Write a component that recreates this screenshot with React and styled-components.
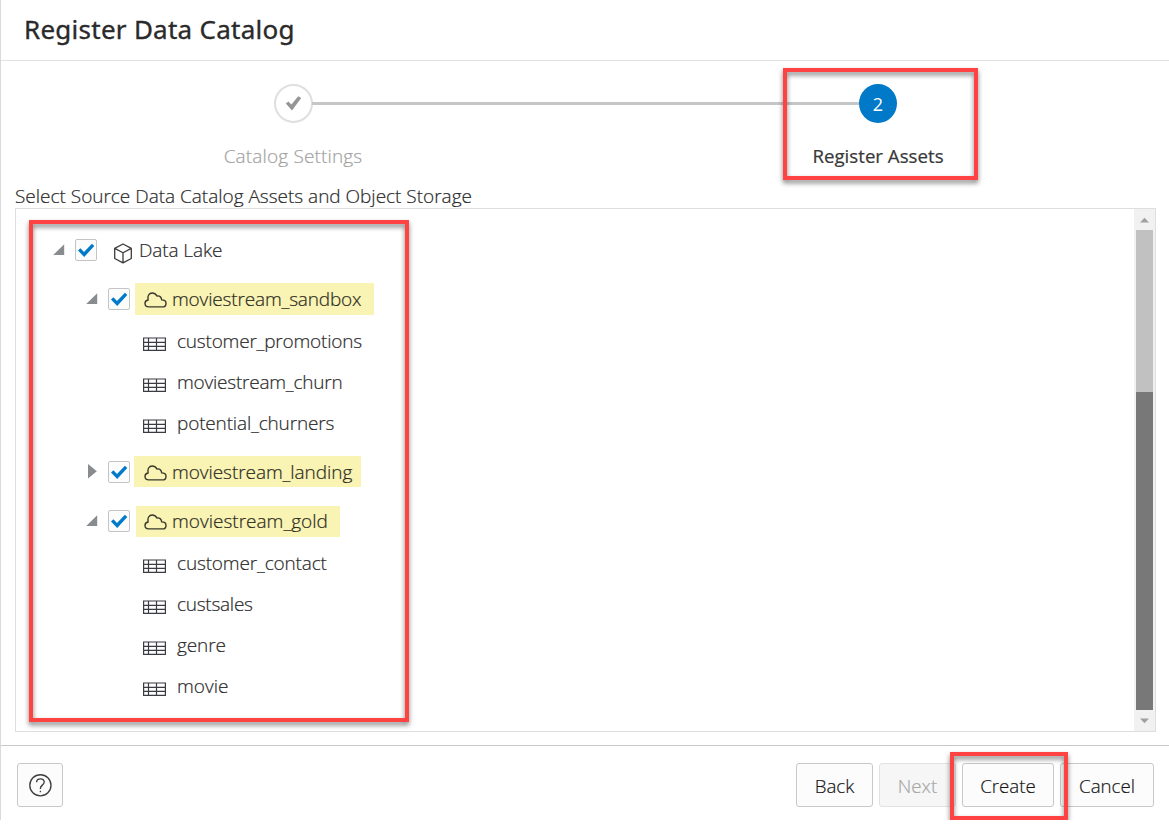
import React from "react";
import styled, { createGlobalStyle } from "styled-components";

const GlobalStyle = createGlobalStyle`
  * { box-sizing: border-box; }
  body {
    margin: 0;
    background: #fff;
    overflow: hidden;
    font-family: "Open Sans", "Noto Sans", sans-serif;
    font-size: 19px;
    font-weight: 300;
    color: #2a2a2a;
    -webkit-text-stroke: 0.2px currentColor;
  }
  svg { display: block; flex: none; }
`;

const Dialog = styled.div`
  position: relative;
  width: 1169px;
  height: 820px;
  display: flex;
  flex-direction: column;
  border-left: 1px solid #dadada;
`;

const Header = styled.header`
  height: 61px;
  padding-left: 23px;
  border-bottom: 1px solid #e2e2e2;
`;

const Title = styled.h1`
  margin: 0;
  font-family: "Noto Sans", sans-serif;
  font-size: 26px;
  line-height: 59px;
  font-weight: 400;
  letter-spacing: 0.26px;
  -webkit-text-stroke: 0.35px currentColor;
`;

const Train = styled.div`
  height: 122px;
  padding: 23px 0 0 184px;
  display: flex;
`;

const Step = styled.div`
  width: 217px;
  display: flex;
  flex-direction: column;
  align-items: center;
`;

const StepCircle = styled.div`
  width: ${(p) => (p.$current ? 38 : 39)}px;
  height: 39px;
  margin-right: ${(p) => (p.$current ? 1 : 0)}px;
  border-radius: 50%;
  border: 2px solid ${(p) => (p.$current ? "#007ac8" : "#dedfe0")};
  background: ${(p) => (p.$current ? "#007ac8" : "#fff")};
  color: #fff;
  font-size: 18px;
  font-weight: 400;
  -webkit-text-stroke: 0;
  display: flex;
  align-items: center;
  justify-content: center;
`;

const StepLabel = styled.div`
  margin-top: 20px;
  line-height: 26px;
  white-space: nowrap;
  color: ${(p) => (p.$current ? "#383838" : "#a2a2a2")};
  font-size: ${(p) => (p.$current ? "18.7px" : "19px")};
  font-weight: ${(p) => (p.$current ? 400 : 300)};
  letter-spacing: ${(p) => (p.$current ? "0" : "0.15px")};
  padding-right: 1px;
  -webkit-text-stroke: 0.2px currentColor;
`;

const Connector = styled.div`
  flex: none;
  width: 547px;
  height: 3px;
  margin: 18px -89px 0 -90px;
  background: #c4c6c8;
`;

const Prompt = styled.div`
  height: 25px;
  padding-left: 14px;
  line-height: 27px;
  white-space: nowrap;
  letter-spacing: -0.01px;
`;

const Panel = styled.section`
  width: 1141px;
  height: 524px;
  margin-left: 14px;
  border: 1px solid #dedede;
  display: flex;
  justify-content: space-between;
`;

const Tree = styled.div`
  padding-top: 14px;
`;

const Branch = styled.div`
  height: ${(p) => p.$h || 49}px;
  padding: ${(p) => p.$top}px 0 0 ${(p) => (p.$root ? 37 : 70)}px;
  display: flex;
  align-items: flex-start;
`;

const Toggle = styled.div`
  width: 12px;
  margin-top: ${(p) => (p.$open ? 10 : 8)}px;
  margin-right: 10px;
`;

const CheckBox = styled.div`
  width: 22px;
  height: 22px;
  margin-top: 5px;
  border: 1px solid #c4c4c4;
  border-radius: 2px;
  background: #fcfcfc;
  display: flex;
  align-items: center;
  justify-content: center;
`;

const RootName = styled.div`
  display: flex;
  gap: 6px;
  padding-left: 16px;
  line-height: 32px;
  svg { margin-top: 9px; }
`;

const Bucket = styled.div`
  width: ${(p) => p.$w}px;
  height: ${(p) => p.$h}px;
  margin: ${(p) => p.$y || 0}px 0 0 ${(p) => p.$x}px;
  padding-left: ${(p) => 14 - p.$x}px;
  background: #f9f3b4;
  display: flex;
  gap: 5px;
  line-height: ${(p) => 32 - 2 * (p.$y || 0)}px;
  color: #2c2b22;
  svg { margin-top: ${(p) => 9 - (p.$y || 0)}px; }
`;

const Leaf = styled.div`
  height: 41px;
  padding-left: 127px;
  display: flex;
  gap: 11px;
  line-height: 41px;
  svg { margin-top: 16px; }
`;

const Name = styled.span`
  white-space: nowrap;
  letter-spacing: ${(p) => p.$track || 0}px;
`;

const ScrollBar = styled.div`
  width: 21px;
  padding: 0 3px 0 2px;
  background: #f1f1f1;
  display: flex;
  flex-direction: column;
`;

const ScrollArrow = styled.div`
  height: 21px;
  padding: 8px 0 0 4px;
`;

const Thumb = styled.div`
  height: 162px;
  width: 17px;
  background: #c1c1c1;
`;

const Track = styled.div`
  height: 318px;
  width: 17px;
  background: #787878;
`;

const Footer = styled.footer`
  margin-top: 13px;
  height: 75px;
  padding: 17px 15px 0 16px;
  border-top: 1px solid #c8c8c8;
  display: flex;
  gap: 6px;
`;

const Button = styled.button`
  width: ${(p) => p.$w}px;
  height: 44px;
  padding: 1px 0 0;
  border: 1px solid #c8c8c8;
  border-radius: 3px;
  background: #fcfcfc;
  color: #161616;
  font: inherit;
  font-size: 18.7px;
  display: flex;
  align-items: center;
  justify-content: center;
  -webkit-text-stroke: 0.2px currentColor;
  &:disabled {
    color: #a6a6a6;
    background: #f6f6f6;
    border-color: #e2e2e2;
  }
`;

const HelpButton = styled(Button)`
  margin-right: auto;
  padding: 0;
`;

const Callout = styled.div`
  position: absolute;
  left: ${(p) => p.$x}px;
  top: ${(p) => p.$y}px;
  width: ${(p) => p.$w}px;
  height: ${(p) => p.$h}px;
  border: 4px solid #ff4343;
  filter: drop-shadow(0 3px 2.5px rgba(0, 0, 0, 0.5));
  pointer-events: none;
`;

const Check = () => (
  <svg width="18" height="15" viewBox="0 0 18 15">
    <path d="M1 7.6 3.4 5.3 7 9.1 14.9 0.8 17.3 3.1 7.2 14Z" fill="#007ac8" />
  </svg>
);

const StepCheck = () => (
  <svg width="17" height="16" viewBox="0 0 17 16">
    <path d="M0.8 7.6 3.4 5.5 6.4 8.6 13.2 0.2 16.2 1.9 7 14.4Z" fill="#959595" />
  </svg>
);

const ExpandedIcon = () => (
  <svg width="12" height="12" viewBox="0 0 12 12">
    <path d="M11.2 0.2V11.1H0.2Z" fill="#898c8f" />
  </svg>
);

const CollapsedIcon = () => (
  <svg width="12" height="15" viewBox="0 0 12 15">
    <path d="M2 0 10.8 7.2 2 14.6Z" fill="#898c8f" />
  </svg>
);

const CubeIcon = () => (
  <svg width="20" height="21" viewBox="0 0 20 21" fill="none" stroke="#3c3c3c" strokeWidth="1.3" strokeLinejoin="round">
    <path d="M10 1 18.3 5.4V15.5L10 19.9 1.7 15.5V5.4ZM1.7 5.4 10 9.8 18.3 5.4M10 9.8V19.9" />
  </svg>
);

const CloudIcon = () => (
  <svg width="23" height="16" viewBox="0 0 23 16" fill="none" stroke="#3a392c" strokeWidth="1.4" strokeLinejoin="round">
    <path d="M4.8 14.9C2.5 14.9 1 13.5 1 11.5 1 9.7 2.3 8.3 4.1 8 3 4 5.2 1 8.2 1 10.5 1 12.1 2.1 12.9 4.1 15.2 3.3 17.6 4.9 17.7 7.9 20.3 7.9 22 9.4 22 11.4 22 13.5 20.6 14.9 18.4 14.9Z" />
  </svg>
);

const TableIcon = () => (
  <svg width="23" height="14" viewBox="0 0 23 14" fill="none" stroke="#3b3b42" strokeWidth="1.2">
    <path d="M0.6 1H22.4V13.4H0.6ZM0.6 5.3H22.4M0.6 9.4H22.4M5.5 1V13.4M13.5 1V13.4" />
  </svg>
);

const HelpIcon = () => (
  <svg width="24" height="24" viewBox="0 0 24 24" fill="none" stroke="#404040" strokeWidth="1.35">
    <circle cx="12.4" cy="12.3" r="10.6" />
    <path d="M8.6 9.3C8.6 7 10.2 5.8 12.4 5.8S16.2 7.1 16.2 9.1C16.2 12.2 12.4 12.1 12.4 15.4V16M12.4 17.8V19.2" />
  </svg>
);

const ArrowIcon = ({ down }) => (
  <svg width="9" height="6" viewBox="0 0 9 6">
    <path d={down ? "M0 0.5H9L4.5 5.3Z" : "M0 5.5H9L4.5 0.7Z"} fill="#a0a0a0" />
  </svg>
);

const buckets = [
  { name: "moviestream_sandbox", open: true, x: 5, w: 239, h: 32, top: 11, track: -0.16,
    tables: [["customer_promotions", -0.2], ["moviestream_churn", -0.22], ["potential_churners", -0.16]] },
  { name: "moviestream_landing", x: 4, w: 227, h: 31, top: 12, track: -0.06, tables: [] },
  { name: "moviestream_gold", open: true, x: 6, y: 1, w: 204, h: 31, top: 12, rowHeight: 50, track: 0.01,
    tables: [["customer_contact", -0.15], ["custsales", -0.25], ["genre", -0.1], ["movie", 0]] },
];

export default function App() {
  return (
    <>
      <GlobalStyle />
      <Dialog>
        <Header>
          <Title>Register Data Catalog</Title>
        </Header>
        <Train>
          <Step>
            <StepCircle><StepCheck /></StepCircle>
            <StepLabel>Catalog Settings</StepLabel>
          </Step>
          <Connector />
          <Step>
            <StepCircle $current>2</StepCircle>
            <StepLabel $current>Register Assets</StepLabel>
          </Step>
        </Train>
        <Prompt>Select Source Data Catalog Assets and Object Storage</Prompt>
        <Panel>
          <Tree>
            <Branch $root $top={11}>
              <Toggle $open><ExpandedIcon /></Toggle>
              <CheckBox><Check /></CheckBox>
              <RootName><CubeIcon /><Name $track={-0.1}>Data Lake</Name></RootName>
            </Branch>
            {buckets.map((b) => (
              <React.Fragment key={b.name}>
                <Branch $top={b.top} $h={b.rowHeight}>
                  <Toggle $open={b.open}>{b.open ? <ExpandedIcon /> : <CollapsedIcon />}</Toggle>
                  <CheckBox><Check /></CheckBox>
                  <Bucket $x={b.x} $y={b.y} $w={b.w} $h={b.h}>
                    <CloudIcon />
                    <Name $track={b.track}>{b.name}</Name>
                  </Bucket>
                </Branch>
                {b.tables.map(([name, track]) => (
                  <Leaf key={name}>
                    <TableIcon />
                    <Name $track={track}>{name}</Name>
                  </Leaf>
                ))}
              </React.Fragment>
            ))}
          </Tree>
          <ScrollBar>
            <ScrollArrow><ArrowIcon /></ScrollArrow>
            <Thumb />
            <Track />
            <ScrollArrow><ArrowIcon down /></ScrollArrow>
          </ScrollBar>
        </Panel>
        <Footer>
          <HelpButton $w={46} aria-label="Help"><HelpIcon /></HelpButton>
          <Button $w={77}>Back</Button>
          <Button $w={77} disabled>Next</Button>
          <Button $w={92}>Create</Button>
          <Button $w={94}>Cancel</Button>
        </Footer>
        <Callout $x={782} $y={68} $w={195} $h={112} />
        <Callout $x={28} $y={220} $w={380} $h={502} />
        <Callout $x={949} $y={752} $w={118} $h={68} />
      </Dialog>
    </>
  );
}
